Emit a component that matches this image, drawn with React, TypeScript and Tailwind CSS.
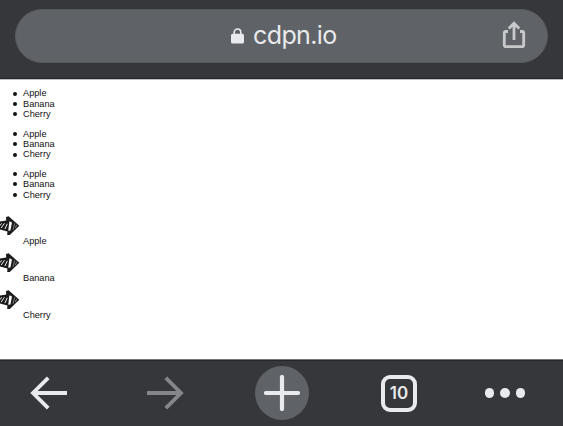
import React from "react";

const fruits = ["Apple", "Banana", "Cherry"];

function BulletList() {
  return (
    <ul className="flex flex-col">
      {fruits.map((fruit) => (
        <li key={fruit} className="flex h-[10.4px] items-center">
          <span className="mr-[6px] h-[4px] w-[4px] rounded-full bg-[#111]" />
          {fruit}
        </li>
      ))}
    </ul>
  );
}

function ArrowMarker() {
  return (
    <svg width="20" height="20" viewBox="0 0 20 20" className="block" fill="none">
      <path d="M0 5.6 L6.2 4.6 L6 1 L8.6 .2 L19.3 9.8 L9.8 19 L7.2 19 L7.4 15.4 L0 13.4 Z" fill="#1c1c1c" />
      <path d="M1.6 7.4 L0 9.6 M4.4 7.3 L1.2 12 M7.3 7.8 L4.9 13" stroke="#eee" strokeWidth="1" />
      <path d="M9.4 5.2 L12 6.4 L10.4 14.6 L8.2 14.8 Z" fill="#fff" />
      <path d="M14.7 7.4 L13 13.8 M16.6 8.9 L15.4 12" stroke="#aaa" strokeWidth="0.7" />
    </svg>
  );
}

function AddressBar() {
  return (
    <header className="h-[80px] border-b border-[#c0c1c3] bg-[#36373b]">
      <div className="flex h-[79px] items-start border-b border-[#242529] pl-[15px] pt-[9px]">
        <div className="flex h-[54px] w-[533px] items-center rounded-full border border-[#58595d] bg-[#5f6368] pl-[215px] text-[#e8eaed]">
          <svg width="13" height="16" viewBox="0 0 13 16" className="-mt-px shrink-0">
            <path d="M3.2 7V4.3a3.3 3.3 0 0 1 6.6 0V7" fill="none" stroke="#e8eaed" strokeWidth="1.6" />
            <rect y="5.8" width="13" height="9.7" rx="1.6" fill="#e8eaed" />
          </svg>
          <span className="-mt-[2px] ml-[9px] w-[249px] whitespace-nowrap font-['Inter',sans-serif] text-[25px] leading-[30px] tracking-[-0.6px]">cdpn.io</span>
          <svg width="24" height="28" viewBox="0 0 24 28" fill="none" stroke="#c8c9ca" strokeWidth="2.8" className="-mt-[2px] shrink-0">
            <path d="M6 10.5H3.8a1.5 1.5 0 0 0-1.5 1.5v12.2a1.5 1.5 0 0 0 1.5 1.5h16.4a1.5 1.5 0 0 0 1.5-1.5V12a1.5 1.5 0 0 0-1.5-1.5H18M12 19V3M6.8 7.5 12 2.3l5.2 5.2" />
          </svg>
        </div>
      </div>
    </header>
  );
}

function Toolbar() {
  return (
    <footer className="flex h-[67px] items-center border-t border-[#747579] bg-[#36373b] pl-[30px] shadow-[inset_0_1px_0_#242529]">
      <svg width="37" height="34" viewBox="0 0 37 34" fill="none" stroke="#e8eaed" strokeWidth="3.8">
        <path d="M37 17H4M18.2 1.8 3 17l15.2 15.2" />
      </svg>
      <svg width="37" height="34" viewBox="0 0 37 34" fill="none" stroke="#858689" strokeWidth="3.8" className="ml-[80px]">
        <path d="M0 17h33M18.8 1.8 34 17 18.8 32.2" />
      </svg>
      <div className="ml-[71px] flex h-[54px] w-[54px] items-center justify-center rounded-full bg-[#5f6368]">
        <svg width="36" height="36" viewBox="0 0 36 36" stroke="#e8eaed" strokeWidth="4.2" strokeLinecap="round">
          <path d="M2 18h32M18 2v32" />
        </svg>
      </div>
      <div className="ml-[72px] flex h-[37px] w-[36px] items-center justify-center rounded-[9px] border-4 border-[#e8eaed] font-['Inter',sans-serif] text-[17px] font-semibold leading-none text-[#e8eaed]">
        10
      </div>
      <div className="ml-[68px] flex gap-[6px]">
        {[0, 1, 2].map((dot) => (
          <span key={dot} className="h-[9.4px] w-[9.4px] rounded-full bg-[#e8eaed]" />
        ))}
      </div>
    </footer>
  );
}

export default function App() {
  return (
    <div className="flex h-[426px] w-[563px] flex-col overflow-hidden bg-white">
      <AddressBar />
      <main className="h-[279px] pt-[8.4px] font-['Liberation_Sans',Arial,sans-serif] text-[9.2px] leading-[10.4px] text-[#111]">
        <div className="flex flex-col gap-[9px] pl-[13px]">
          <BulletList />
          <BulletList />
          <BulletList />
        </div>
        <ul className="mt-[16px]">
          {fruits.map((fruit) => (
            <li key={fruit} className="h-[37px]">
              <ArrowMarker />
              <span className="block pl-[23px]">{fruit}</span>
            </li>
          ))}
        </ul>
      </main>
      <Toolbar />
    </div>
  );
}
